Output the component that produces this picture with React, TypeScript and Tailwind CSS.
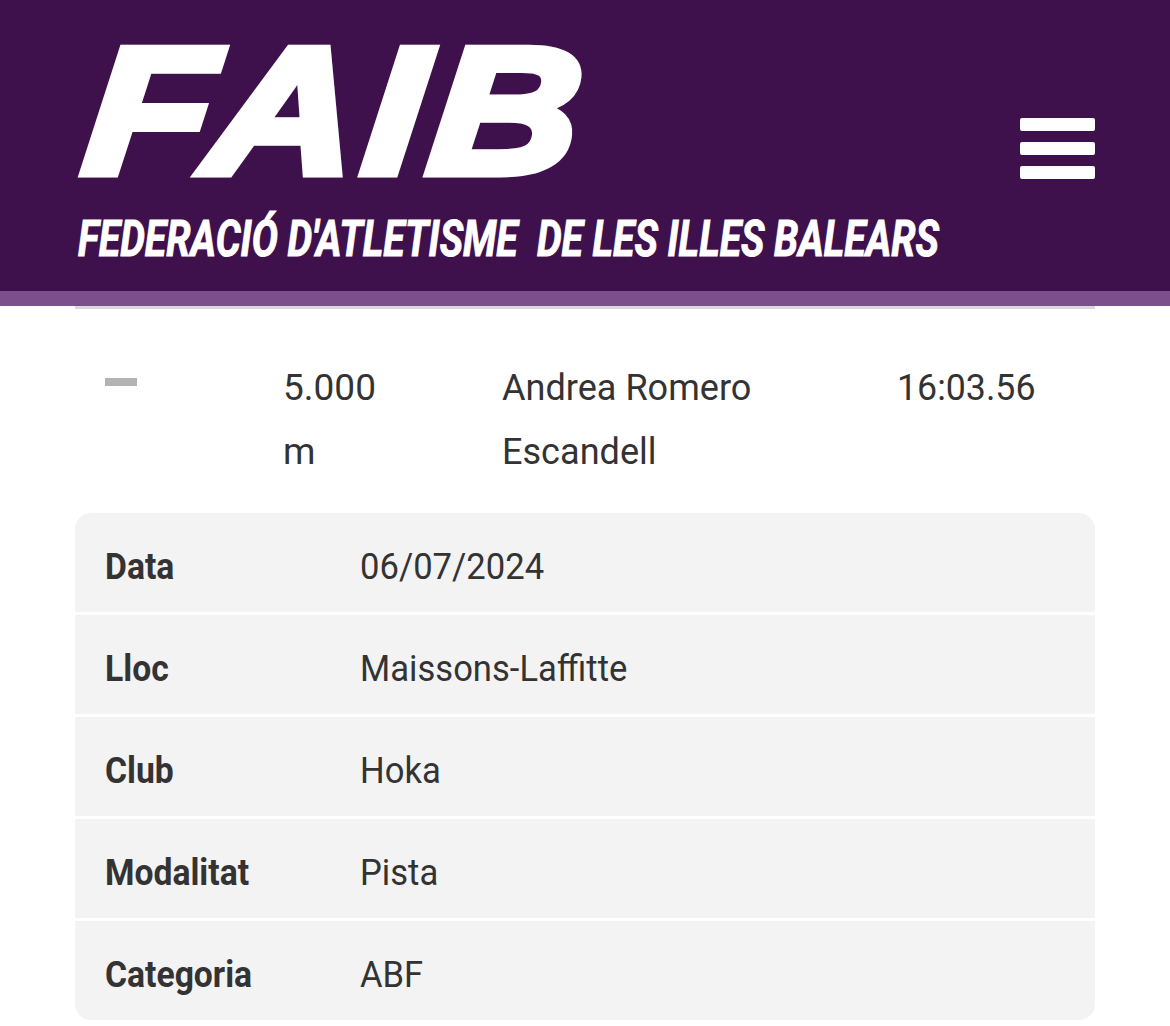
import React from 'react';

const DETAILS = [
  { label: 'Data', value: '06/07/2024' },
  { label: 'Lloc', value: 'Maissons-Laffitte' },
  { label: 'Club', value: 'Hoka' },
  { label: 'Modalitat', value: 'Pista' },
  { label: 'Categoria', value: 'ABF' },
];

const App: React.FC = () => {
  return (
    <div className="h-[1026px] overflow-hidden bg-white font-['Roboto',sans-serif] font-[380] text-[#333333]">
      <header className="flex h-[291px] justify-between bg-[#3f114c] pl-[78px] pr-[75px]">
        <div className="min-w-0">
          <div className="mt-[21px] w-fit origin-bottom-left scale-x-[1.145] -skew-x-[5deg] whitespace-nowrap font-['Liberation_Sans',sans-serif] text-[180px] font-bold italic leading-none tracking-[7px] text-white [-webkit-text-stroke:9px_white]">
            FAIB
          </div>
          <div className="mt-[8px] w-fit origin-left scale-x-[0.783] whitespace-nowrap text-[50px] font-bold italic leading-[60px] text-white [-webkit-text-stroke:1px_white]">
            FEDERACIÓ D'ATLETISME&nbsp; DE LES ILLES BALEARS
          </div>
        </div>
        <button className="mt-[118px] flex h-[61px] w-[75px] shrink-0 flex-col gap-[11px]">
          <span className="h-[13px] w-full rounded-[2px] bg-white" />
          <span className="h-[13px] w-full rounded-[2px] bg-white" />
          <span className="h-[13px] w-full rounded-[2px] bg-white" />
        </button>
      </header>
      <div className="h-[15px] bg-[#7b4e8c]" />

      <main className="mx-[75px]">
        <div className="h-[3px] bg-[#d9d9d9]" />
        <div className="grid h-[204px] grid-cols-[209px_219px_395px_1fr] pt-[47px] text-[37px] leading-[64px]">
          <div className="pl-[30px] pt-[22px]">
            <div className="h-[8px] w-[32px] bg-[#b3b3b3]" />
          </div>
          <div className="w-[110px] -translate-x-px">5.000 m</div>
          <div className="w-[300px] origin-left scale-x-[0.975] -translate-x-px">Andrea Romero Escandell</div>
          <div className="origin-left scale-x-[0.965] -translate-x-px">16:03.56</div>
        </div>

        <div className="flex flex-col gap-[3px] overflow-hidden rounded-[16px]">
          {DETAILS.map((row) => (
            <div key={row.label} className="flex h-[99px] items-center bg-[#f3f3f3] pl-[30px] pt-[8px] text-[37px]">
              <span className="w-[255px]">
                <span className="inline-block origin-left scale-x-[0.91] font-bold">{row.label}</span>
              </span>
              <span className="inline-block origin-left scale-x-[0.935]">{row.value}</span>
            </div>
          ))}
        </div>
      </main>
    </div>
  );
};

export default App;
